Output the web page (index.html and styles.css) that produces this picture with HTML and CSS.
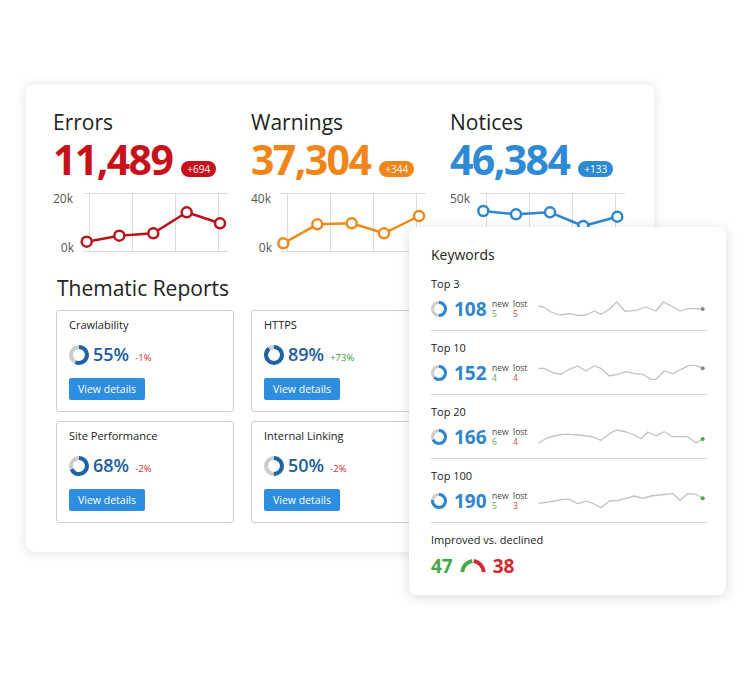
FILE: index.html
```html
<!DOCTYPE html>
<html>
<head>
<meta charset="utf-8">
<link rel="stylesheet" href="styles.css">
</head>
<body>
<div class="stage">
  <div class="main-card">
    <div class="metrics">
      <div class="metric">
        <div class="metric-title">Errors</div>
        <div class="metric-value-row">
          <span class="metric-value red">11,489</span>
          <span class="badge bg-red">+694</span>
        </div>
        <svg class="chart" width="180" height="70" viewBox="0 0 180 70">
          <g class="grid">
            <line x1="36.5" y1="7" x2="36.5" y2="65"/><line x1="79.5" y1="7" x2="79.5" y2="65"/>
            <line x1="122.5" y1="7" x2="122.5" y2="65"/><line x1="165.5" y1="7" x2="165.5" y2="65"/>
            <line x1="30" y1="7.5" x2="175" y2="7.5"/><line x1="30" y1="65.5" x2="175" y2="65.5"/>
          </g>
          <text x="0" y="17" class="axis">20k</text>
          <text x="21" y="66" class="axis" text-anchor="end">0k</text>
          <g class="series s-red">
            <polyline points="33.7,55.7 66.3,49.7 100.3,47.3 133.7,26.3 167,37.3"/>
            <circle cx="33.7" cy="55.7" r="5"/><circle cx="66.3" cy="49.7" r="5"/><circle cx="100.3" cy="47.3" r="5"/><circle cx="133.7" cy="26.3" r="5"/><circle cx="167" cy="37.3" r="5"/>
          </g>
        </svg>
      </div>
      <div class="metric">
        <div class="metric-title">Warnings</div>
        <div class="metric-value-row">
          <span class="metric-value orange">37,304</span>
          <span class="badge bg-orange">+344</span>
        </div>
        <svg class="chart" width="180" height="70" viewBox="0 0 180 70">
          <g class="grid">
            <line x1="36.5" y1="7" x2="36.5" y2="65"/><line x1="79.5" y1="7" x2="79.5" y2="65"/>
            <line x1="122.5" y1="7" x2="122.5" y2="65"/><line x1="165.5" y1="7" x2="165.5" y2="65"/>
            <line x1="30" y1="7.5" x2="175" y2="7.5"/><line x1="30" y1="65.5" x2="175" y2="65.5"/>
          </g>
          <text x="0" y="17" class="axis">40k</text>
          <text x="21" y="66" class="axis" text-anchor="end">0k</text>
          <g class="series s-orange">
            <polyline points="32.3,57.3 66.3,38.3 100.7,37.3 133,47.3 168,30"/>
            <circle cx="32.3" cy="57.3" r="5"/><circle cx="66.3" cy="38.3" r="5"/><circle cx="100.7" cy="37.3" r="5"/><circle cx="133" cy="47.3" r="5"/><circle cx="168" cy="30" r="5"/>
          </g>
        </svg>
      </div>
      <div class="metric">
        <div class="metric-title">Notices</div>
        <div class="metric-value-row">
          <span class="metric-value blue">46,384</span>
          <span class="badge bg-blue">+133</span>
        </div>
        <svg class="chart" width="180" height="70" viewBox="0 0 180 70">
          <g class="grid">
            <line x1="36.5" y1="7" x2="36.5" y2="65"/><line x1="79.5" y1="7" x2="79.5" y2="65"/>
            <line x1="122.5" y1="7" x2="122.5" y2="65"/><line x1="165.5" y1="7" x2="165.5" y2="65"/>
            <line x1="30" y1="7.5" x2="175" y2="7.5"/><line x1="30" y1="65.5" x2="175" y2="65.5"/>
          </g>
          <text x="0" y="17" class="axis">50k</text>
          <text x="21" y="66" class="axis" text-anchor="end">0k</text>
          <g class="series s-blue">
            <polyline points="33.3,25 66,28.3 100,26.3 133.3,40 167.3,30.7"/>
            <circle cx="33.3" cy="25" r="5"/><circle cx="66" cy="28.3" r="5"/><circle cx="100" cy="26.3" r="5"/><circle cx="133.3" cy="40" r="5"/><circle cx="167.3" cy="30.7" r="5"/>
          </g>
        </svg>
      </div>
    </div>

    <div class="thematic">
      <div class="section-title">Thematic Reports</div>
      <div class="report-grid">
        <div class="report">
          <div class="report-name">Crawlability</div>
          <div class="report-stat">
            <svg class="donut" width="20" height="20" viewBox="0 0 20 20"><circle cx="10" cy="10" r="8" class="d-bg"/><circle cx="10" cy="10" r="8" class="d-fg" stroke-dasharray="28.6 50.27"/></svg>
            <span class="pct">55%</span><span class="delta neg">-1%</span>
          </div>
          <div class="btn">View details</div>
        </div>
        <div class="report">
          <div class="report-name">HTTPS</div>
          <div class="report-stat">
            <svg class="donut" width="20" height="20" viewBox="0 0 20 20"><circle cx="10" cy="10" r="8" class="d-bg"/><circle cx="10" cy="10" r="8" class="d-fg" stroke-dasharray="44.7 50.27"/></svg>
            <span class="pct">89%</span><span class="delta pos">+73%</span>
          </div>
          <div class="btn">View details</div>
        </div>
        <div class="report">
          <div class="report-name">Site Performance</div>
          <div class="report-stat">
            <svg class="donut" width="20" height="20" viewBox="0 0 20 20"><circle cx="10" cy="10" r="8" class="d-bg"/><circle cx="10" cy="10" r="8" class="d-fg" stroke-dasharray="34.2 50.27"/></svg>
            <span class="pct">68%</span><span class="delta neg">-2%</span>
          </div>
          <div class="btn">View details</div>
        </div>
        <div class="report">
          <div class="report-name">Internal Linking</div>
          <div class="report-stat">
            <svg class="donut" width="20" height="20" viewBox="0 0 20 20"><circle cx="10" cy="10" r="8" class="d-bg"/><circle cx="10" cy="10" r="8" class="d-fg" stroke-dasharray="25.1 50.27"/></svg>
            <span class="pct">50%</span><span class="delta neg">-2%</span>
          </div>
          <div class="btn">View details</div>
        </div>
      </div>
    </div>
  </div>

  <div class="kw-card">
    <div class="kw-title">Keywords</div>

    <div class="kw-block">
      <div class="kw-label">Top 3</div>
      <div class="kw-row">
        <svg class="kdonut" width="16" height="16" viewBox="0 0 16 16"><circle cx="8" cy="8" r="6.5" class="k-bg"/><circle cx="8" cy="8" r="6.5" class="k-fg" stroke-dasharray="20 40.84"/></svg>
        <span class="kw-num">108</span>
        <div class="nl"><span class="nl-l">new</span><span class="nl-l">lost</span><span class="nl-g">5</span><span class="nl-r">5</span></div>
        <svg class="spark" width="170" height="24" viewBox="0 0 170 24">
          <polyline points="2.7,9 7.3,10 15,15 23.3,18 33.3,16.7 41.7,18.3 50,18 58.3,14 65,17.3 73.3,12.3 80.7,5 89,14.3 100,13.3 110,10 120,14 127.3,5 136.7,9.7 144,14 151.7,11.7 160,11.7 166.7,12"/>
          <circle cx="166.7" cy="12" r="2" class="dot-grey"/>
        </svg>
      </div>
    </div>

    <div class="kw-block">
      <div class="kw-label">Top 10</div>
      <div class="kw-row">
        <svg class="kdonut" width="16" height="16" viewBox="0 0 16 16"><circle cx="8" cy="8" r="6.5" class="k-bg"/><circle cx="8" cy="8" r="6.5" class="k-fg" stroke-dasharray="25 40.84"/></svg>
        <span class="kw-num">152</span>
        <div class="nl"><span class="nl-l">new</span><span class="nl-l">lost</span><span class="nl-g">4</span><span class="nl-r">4</span></div>
        <svg class="spark" width="170" height="24" viewBox="0 0 170 24">
          <polyline points="2.7,7.3 8.3,7.3 16.7,11.7 25,13.3 33.3,8.3 41.7,5 50,10 58.3,5 65,7.3 73.3,15 81.7,13.3 90,10.7 98.3,12.7 106.7,13.3 115,18.3 120,18.3 128.3,10 136.7,12.7 145,8.3 153.3,4.3 160,4.3 166.7,7.3"/>
          <circle cx="166.7" cy="7.3" r="2" class="dot-grey"/>
        </svg>
      </div>
    </div>

    <div class="kw-block">
      <div class="kw-label">Top 20</div>
      <div class="kw-row">
        <svg class="kdonut" width="16" height="16" viewBox="0 0 16 16"><circle cx="8" cy="8" r="6.5" class="k-bg"/><circle cx="8" cy="8" r="6.5" class="k-fg" stroke-dasharray="27 40.84"/></svg>
        <span class="kw-num">166</span>
        <div class="nl"><span class="nl-l">new</span><span class="nl-l">lost</span><span class="nl-g">6</span><span class="nl-r">4</span></div>
        <svg class="spark" width="170" height="24" viewBox="0 0 170 24">
          <polyline points="2.7,18.3 10,13.3 18.3,11 26.7,9.3 35,9.3 43.3,10 51.7,11 56.7,12 65,15.3 73.3,8.7 80.7,5 90,7 98.3,10 105,13.7 111.7,7 120,11 128.3,6.7 136.7,11.7 145,11.7 151.7,11.7 160,18 166.7,14"/>
          <circle cx="166.7" cy="14" r="2" class="dot-green"/>
        </svg>
      </div>
    </div>

    <div class="kw-block">
      <div class="kw-label">Top 100</div>
      <div class="kw-row">
        <svg class="kdonut" width="16" height="16" viewBox="0 0 16 16"><circle cx="8" cy="8" r="6.5" class="k-bg"/><circle cx="8" cy="8" r="6.5" class="k-fg" stroke-dasharray="31 40.84"/></svg>
        <span class="kw-num">190</span>
        <div class="nl"><span class="nl-l">new</span><span class="nl-l">lost</span><span class="nl-g">5</span><span class="nl-r">3</span></div>
        <svg class="spark" width="170" height="24" viewBox="0 0 170 24">
          <polyline points="2.7,14.3 10,13.3 18.3,12 26.7,10.3 33.3,10.3 41.7,14.7 50,12 56.7,14.3 65,18.7 73.3,12 81.7,11.3 90,9.3 98.3,7 106.7,9.3 115,7 123.3,6 136.7,4.7 144,11.3 151.7,4.7 160,5.3 166.7,9.3"/>
          <circle cx="166.7" cy="9.3" r="2" class="dot-green"/>
        </svg>
      </div>
    </div>

    <div class="kw-last">
      <div class="kw-label">Improved vs. declined</div>
      <div class="iv-row">
        <span class="iv-num green">47</span>
        <svg class="gauge" width="30" height="16" viewBox="0 0 30 16">
          <path d="M4.2,14 A12,12 0 0 1 14.3,3.02" class="g-green"/>
          <path d="M15.7,3.02 A12,12 0 0 1 25.8,14" class="g-red"/>
        </svg>
        <span class="iv-num red2">38</span>
      </div>
    </div>
  </div>
</div>
</body>
</html>
```

FILE: styles.css
```css
* { box-sizing: border-box; }
html, body { margin: 0; padding: 0; background: #fff; }
body {
  font-family: "Open Sans", "Noto Sans", sans-serif;
  color: #222;
  width: 750px;
  height: 679px;
  overflow: hidden;
}
.stage {
  position: relative;
  padding: 84px 0 0 26px;
}
.main-card {
  width: 628px;
  height: 468px;
  background: #fff;
  border-radius: 8px;
  box-shadow: 0 1px 12px rgba(0, 0, 0, 0.12);
  padding: 26px 27px 0 27px;
}
.metrics {
  display: grid;
  grid-template-columns: 198px 199px 180px;
}
.metric-title {
  font-size: 21px;
  line-height: 24px;
  color: #222;
}
.metric-value-row {
  display: flex;
  align-items: flex-end;
  margin-top: 3px;
  height: 44px;
}
.metric-value {
  font-size: 41px;
  line-height: 44px;
  font-weight: 700;
  letter-spacing: -1.6px;
}
.red { color: #c8101a; }
.orange { color: #f08519; }
.blue { color: #2f8ad6; }
.badge {
  margin-left: 9px;
  margin-bottom: 4px;
  height: 16px;
  padding: 0 6px;
  border-radius: 8px;
  color: #fff;
  font-size: 10px;
  line-height: 16px;
}
.bg-red { background: #c8101a; }
.bg-orange { background: #f08519; }
.bg-blue { background: #2f8ad6; }
.chart { display: block; margin-top: 5px; }
.grid line { stroke: #dcdcdc; stroke-width: 1; }
.axis { font-family: "Open Sans", sans-serif; font-size: 12px; fill: #555; }
.series polyline { fill: none; stroke-width: 2.5; stroke-linejoin: round; }
.series circle { fill: #fff; stroke-width: 2.5; }
.s-red polyline, .s-red circle { stroke: #b8121b; }
.s-orange polyline, .s-orange circle { stroke: #ec8a1c; }
.s-blue polyline, .s-blue circle { stroke: #2f86cf; }

.thematic {
  margin-top: 20px;
  padding-left: 3px;
}
.section-title {
  font-size: 21px;
  line-height: 24px;
  padding-left: 1px;
  color: #222;
}
.report-grid {
  margin-top: 10px;
  display: grid;
  grid-template-columns: 178px 178px;
  column-gap: 17px;
  row-gap: 9px;
}
.report {
  height: 102px;
  border: 1px solid #cfcfcf;
  border-radius: 3px;
  padding: 7px 12px 0 12px;
}
.report-name {
  font-size: 11px;
  line-height: 14px;
  color: #222;
}
.report-stat {
  display: flex;
  align-items: center;
  margin-top: 12px;
  height: 21px;
}
.donut { transform: rotate(-90deg); flex: none; }
.d-bg { fill: none; stroke: #cccccc; stroke-width: 4; }
.d-fg { fill: none; stroke: #1f63a6; stroke-width: 4; }
.pct {
  margin-left: 4px;
  font-size: 18px;
  font-weight: 600;
  color: #1d5d9b;
  line-height: 21px;
}
.delta {
  margin-left: 6px;
  font-size: 9.5px;
  margin-top: 5px;
}
.neg { color: #d32f2f; }
.pos { color: #3c9c3c; }
.btn {
  margin-top: 13px;
  width: 76px;
  height: 22px;
  border-radius: 2px;
  background: #2d8de0;
  color: #fff;
  font-size: 10.5px;
  line-height: 22px;
  text-align: center;
}

.kw-card {
  position: absolute;
  left: 409px;
  top: 227px;
  width: 317px;
  height: 368px;
  background: #fff;
  border-radius: 8px;
  box-shadow: 0 2px 12px rgba(0, 0, 0, 0.15);
  padding: 19px 19px 0 22px;
}
.kw-title {
  font-size: 14px;
  line-height: 18px;
  font-weight: 500;
  color: #222;
  margin-bottom: 3px;
}
.kw-block {
  padding: 10px 0 11px 0;
  border-bottom: 1px solid #d6d6d6;
}
.kw-label {
  font-size: 11px;
  line-height: 14px;
  color: #222;
}
.kw-row {
  display: flex;
  align-items: center;
  height: 20px;
  margin-top: 8px;
}
.kdonut { transform: rotate(-90deg); flex: none; }
.k-bg { fill: none; stroke: #cccccc; stroke-width: 3; }
.k-fg { fill: none; stroke: #2f86cc; stroke-width: 3; }
.kw-num {
  margin-left: 7px;
  width: 38px;
  font-size: 19px;
  font-weight: 700;
  color: #2f86cc;
  line-height: 20px;
}
.nl {
  display: grid;
  grid-template-columns: 20px 20px;
  column-gap: 1px;
  font-size: 8.5px;
  line-height: 10px;
  width: 44px;
}
.nl-l { color: #444; }
.nl-g { color: #5aa85a; }
.nl-r { color: #d44; }
.spark { flex: none; }
.spark polyline { fill: none; stroke: #c2c2c2; stroke-width: 1.3; stroke-linejoin: round; }
.dot-grey { fill: #888; }
.dot-green { fill: #45a845; }
.kw-last {
  padding-top: 10px;
}
.iv-row {
  display: flex;
  align-items: center;
  height: 20px;
  margin-top: 9px;
}
.iv-num {
  font-size: 19px;
  font-weight: 700;
  line-height: 20px;
}
.green { color: #45a845; }
.red2 { color: #d0282e; }
.gauge { margin: 0 5px; flex: none; }
.g-green { fill: none; stroke: #45a845; stroke-width: 4; }
.g-red { fill: none; stroke: #d0282e; stroke-width: 4; }
```
